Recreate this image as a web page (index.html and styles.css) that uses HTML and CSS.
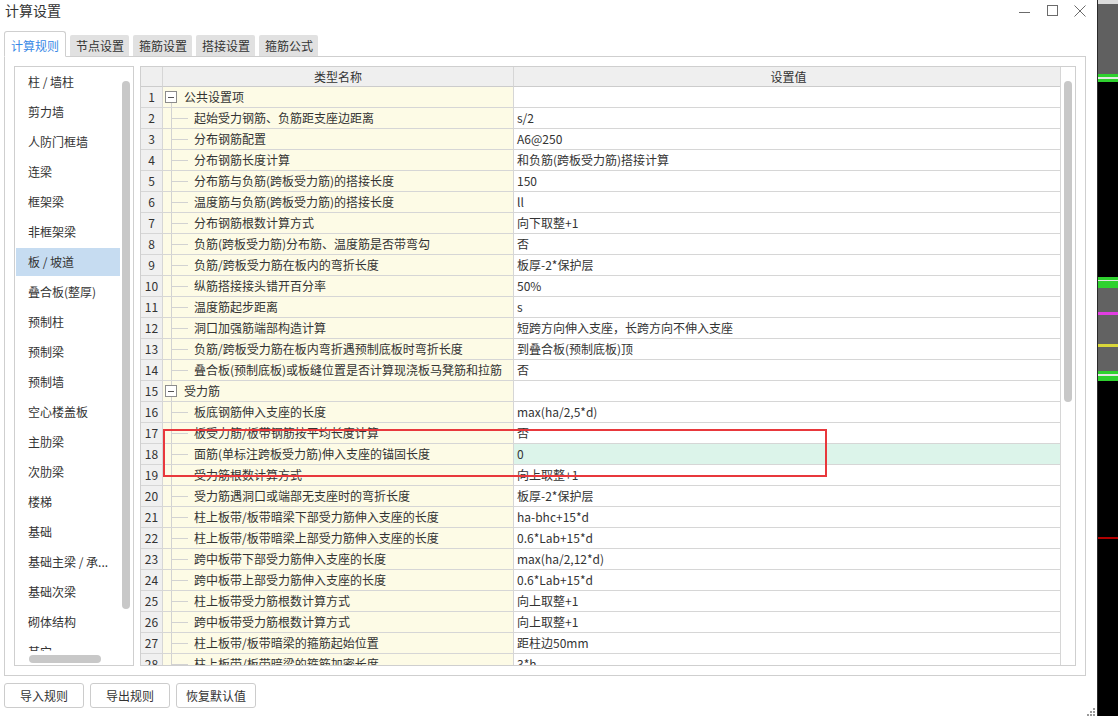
FILE: index.html
```html
<!DOCTYPE html>
<html lang="zh-CN">
<head>
<meta charset="utf-8">
<title>计算设置</title>
<link rel="stylesheet" href="styles.css">
</head>
<body>
<div class="screen">
  <div class="dialog">
    <div class="titlebar">
      <div class="title">计算设置</div>
      <div class="winctl">
        <svg class="ctl" width="11" height="11" viewBox="0 0 11 11"><path d="M0 7.5H11" stroke="#6b6b6b" fill="none"/></svg>
        <svg class="ctl" width="11" height="11" viewBox="0 0 11 11"><rect x="0.5" y="0.5" width="10" height="10" fill="none" stroke="#6b6b6b"/></svg>
        <svg class="ctl" width="12" height="12" viewBox="0 0 12 12"><path d="M0.5 0.5L11.5 11.5M11.5 0.5L0.5 11.5" stroke="#6b6b6b" fill="none"/></svg>
      </div>
    </div>
    <div class="tabs">
      <div class="tab active">计算规则</div>
      <div class="tab">节点设置</div>
      <div class="tab">箍筋设置</div>
      <div class="tab">搭接设置</div>
      <div class="tab">箍筋公式</div>
    </div>
    <div class="panel">
      <div class="sidebar">
        <div class="side-main">
          <ul class="side-list">
            <li>柱 / 墙柱</li>
            <li>剪力墙</li>
            <li>人防门框墙</li>
            <li>连梁</li>
            <li>框架梁</li>
            <li>非框架梁</li>
            <li class="sel">板 / 坡道</li>
            <li>叠合板(整厚)</li>
            <li>预制柱</li>
            <li>预制梁</li>
            <li>预制墙</li>
            <li>空心楼盖板</li>
            <li>主肋梁</li>
            <li>次肋梁</li>
            <li>楼梯</li>
            <li>基础</li>
            <li>基础主梁 / 承...</li>
            <li>基础次梁</li>
            <li>砌体结构</li>
            <li>其它</li>
          </ul>
          <div class="side-vscroll"><div class="vthumb side-thumb"></div></div>
        </div>
        <div class="side-hscroll"><div class="hthumb"></div></div>
      </div>
      <div class="grid">
        <div class="grid-main">
          <div class="row head">
            <div class="c num"></div>
            <div class="c name">类型名称</div>
            <div class="c val">设置值</div>
          </div>
          <div class="body">
            <div class="row"><div class="c num">1</div><div class="c name group first"><span class="toggle"></span>公共设置项</div><div class="c val"></div></div>
            <div class="row"><div class="c num">2</div><div class="c name child">起始受力钢筋、负筋距支座边距离</div><div class="c val">s/2</div></div>
            <div class="row"><div class="c num">3</div><div class="c name child">分布钢筋配置</div><div class="c val">A6@250</div></div>
            <div class="row"><div class="c num">4</div><div class="c name child">分布钢筋长度计算</div><div class="c val">和负筋(跨板受力筋)搭接计算</div></div>
            <div class="row"><div class="c num">5</div><div class="c name child">分布筋与负筋(跨板受力筋)的搭接长度</div><div class="c val">150</div></div>
            <div class="row"><div class="c num">6</div><div class="c name child">温度筋与负筋(跨板受力筋)的搭接长度</div><div class="c val">ll</div></div>
            <div class="row"><div class="c num">7</div><div class="c name child">分布钢筋根数计算方式</div><div class="c val">向下取整+1</div></div>
            <div class="row"><div class="c num">8</div><div class="c name child">负筋(跨板受力筋)分布筋、温度筋是否带弯勾</div><div class="c val">否</div></div>
            <div class="row"><div class="c num">9</div><div class="c name child">负筋/跨板受力筋在板内的弯折长度</div><div class="c val">板厚-2*保护层</div></div>
            <div class="row"><div class="c num">10</div><div class="c name child">纵筋搭接接头错开百分率</div><div class="c val">50%</div></div>
            <div class="row"><div class="c num">11</div><div class="c name child">温度筋起步距离</div><div class="c val">s</div></div>
            <div class="row"><div class="c num">12</div><div class="c name child">洞口加强筋端部构造计算</div><div class="c val">短跨方向伸入支座，长跨方向不伸入支座</div></div>
            <div class="row"><div class="c num">13</div><div class="c name child">负筋/跨板受力筋在板内弯折遇预制底板时弯折长度</div><div class="c val">到叠合板(预制底板)顶</div></div>
            <div class="row"><div class="c num">14</div><div class="c name child">叠合板(预制底板)或板缝位置是否计算现浇板马凳筋和拉筋</div><div class="c val">否</div></div>
            <div class="row"><div class="c num">15</div><div class="c name group"><span class="toggle"></span>受力筋</div><div class="c val"></div></div>
            <div class="row"><div class="c num">16</div><div class="c name child">板底钢筋伸入支座的长度</div><div class="c val">max(ha/2,5*d)</div></div>
            <div class="row"><div class="c num">17</div><div class="c name child">板受力筋/板带钢筋按平均长度计算</div><div class="c val">否</div></div>
            <div class="row"><div class="c num">18</div><div class="c name child">面筋(单标注跨板受力筋)伸入支座的锚固长度</div><div class="c val hl">0</div></div>
            <div class="row"><div class="c num">19</div><div class="c name child">受力筋根数计算方式</div><div class="c val">向上取整+1</div></div>
            <div class="row"><div class="c num">20</div><div class="c name child">受力筋遇洞口或端部无支座时的弯折长度</div><div class="c val">板厚-2*保护层</div></div>
            <div class="row"><div class="c num">21</div><div class="c name child">柱上板带/板带暗梁下部受力筋伸入支座的长度</div><div class="c val">ha-bhc+15*d</div></div>
            <div class="row"><div class="c num">22</div><div class="c name child">柱上板带/板带暗梁上部受力筋伸入支座的长度</div><div class="c val">0.6*Lab+15*d</div></div>
            <div class="row"><div class="c num">23</div><div class="c name child">跨中板带下部受力筋伸入支座的长度</div><div class="c val">max(ha/2,12*d)</div></div>
            <div class="row"><div class="c num">24</div><div class="c name child">跨中板带上部受力筋伸入支座的长度</div><div class="c val">0.6*Lab+15*d</div></div>
            <div class="row"><div class="c num">25</div><div class="c name child">柱上板带受力筋根数计算方式</div><div class="c val">向上取整+1</div></div>
            <div class="row"><div class="c num">26</div><div class="c name child">跨中板带受力筋根数计算方式</div><div class="c val">向上取整+1</div></div>
            <div class="row"><div class="c num">27</div><div class="c name child">柱上板带/板带暗梁的箍筋起始位置</div><div class="c val">距柱边50mm</div></div>
            <div class="row"><div class="c num">28</div><div class="c name child">柱上板带/板带暗梁的箍筋加密长度</div><div class="c val">3*h</div></div>
          </div>
        </div>
        <div class="grid-vscroll"><div class="vthumb grid-thumb"></div></div>
        <div class="redbox"></div>
      </div>
    </div>
    <div class="footer">
      <button class="btn">导入规则</button>
      <button class="btn">导出规则</button>
      <button class="btn">恢复默认值</button>
      <svg class="grip" width="9" height="9" viewBox="0 0 9 9">
        <rect x="7" y="1" width="2" height="2" fill="#9a9a9a"/>
        <rect x="4" y="4" width="2" height="2" fill="#9a9a9a"/>
        <rect x="7" y="4" width="2" height="2" fill="#9a9a9a"/>
        <rect x="1" y="7" width="2" height="2" fill="#9a9a9a"/>
        <rect x="4" y="7" width="2" height="2" fill="#9a9a9a"/>
        <rect x="7" y="7" width="2" height="2" fill="#9a9a9a"/>
      </svg>
    </div>
  </div>
  <div class="strip"></div>
</div>
</body>
</html>
```

FILE: styles.css
```css
* { box-sizing: border-box; }

html, body {
  margin: 0;
  padding: 0;
}

body {
  font-family: "Noto Sans CJK SC", "Noto Sans", "Liberation Sans", sans-serif;
  font-size: 12px;
  color: #333;
  background: #fff;
}

.screen {
  display: flex;
  width: 1118px;
  height: 716px;
  overflow: hidden;
  background: #fff;
}

.dialog {
  width: 1097px;
  height: 716px;
  display: flex;
  flex-direction: column;
  background: #fff;
}

/* title bar */
.titlebar {
  height: 24px;
  display: flex;
  align-items: flex-start;
}

.title {
  font-size: 14px;
  line-height: 21px;
  padding-left: 5px;
  color: #333;
}

.winctl {
  margin-left: auto;
  display: flex;
  align-items: flex-start;
  padding-top: 5px;
  padding-right: 11px;
}

.ctl { display: block; }
.ctl + .ctl { margin-left: 17px; }
.ctl:last-child { margin-left: 16px; }

/* tabs */
.tabs {
  height: 26px;
  margin-top: 7px;
  margin-bottom: -1px;
  padding-left: 4px;
  display: flex;
  align-items: flex-end;
  gap: 4px;
  position: relative;
  z-index: 1;
}

.tab {
  height: 21px;
  margin-bottom: 1px;
  padding: 0 6px;
  width: 59px;
  background: #e1e1e1;
  border-radius: 2px 2px 0 0;
  line-height: 21px;
  text-align: center;
  color: #333;
  white-space: nowrap;
}

.tab.active {
  height: 26px;
  width: 62px;
  margin-bottom: 0;
  background: #fff;
  border: 1px solid #cfcfcf;
  border-bottom-color: #fff;
  border-radius: 3px 3px 0 0;
  color: #3a8ae6;
  line-height: 25px;
  padding-top: 1px;
}

/* panel */
.panel {
  margin-left: 4px;
  width: 1082px;
  height: 620px;
  border: 1px solid #cfcfcf;
  padding: 9px;
  display: flex;
  gap: 6px;
}

/* sidebar */
.sidebar {
  width: 120px;
  height: 600px;
  border: 1px solid #cfcfcf;
  display: flex;
  flex-direction: column;
  background: #fff;
}

.side-main {
  height: 584px;
  display: flex;
  overflow: hidden;
}

.side-list {
  list-style: none;
  margin: 0;
  padding: 1px 0 0 0;
  width: 105px;
  overflow: hidden;
}

.side-list li {
  margin-left: 1px;
  width: 104px;
  height: 28px;
  margin-bottom: 2px;
  padding-left: 12px;
  line-height: 28px;
  white-space: nowrap;
  color: #333;
}

.side-list li.sel {
  background: #c6dcf1;
}

.side-vscroll {
  width: 13px;
  padding-top: 14px;
  padding-left: 2px;
}

.vthumb {
  width: 8px;
  background: #c8c8c8;
  border-radius: 4px;
}

.side-thumb { height: 528px; }

.side-hscroll {
  height: 14px;
  padding-top: 4px;
  padding-left: 14px;
}

.hthumb {
  width: 72px;
  height: 8px;
  background: #c8c8c8;
  border-radius: 4px;
}

/* grid */
.grid {
  position: relative;
  width: 936px;
  height: 600px;
  border: 1px solid #cfcfcf;
  display: flex;
}

.grid-main {
  flex: 1;
  display: flex;
  flex-direction: column;
  border-right: 1px solid #d6d6d6;
  overflow: hidden;
}

.body {
  flex: 1;
  overflow: hidden;
}

.row {
  display: grid;
  grid-template-columns: 22px 351px 1fr;
  height: 21px;
}

.c {
  height: 21px;
  border-bottom: 1px solid #d6d6d6;
  line-height: 20px;
  white-space: nowrap;
  overflow: hidden;
}

.num {
  background: #f0f0f0;
  border-right: 1px solid #d6d6d6;
  text-align: center;
}

.name {
  background-color: #fdfbe6;
  border-right: 1px solid #d6d6d6;
}

.val {
  padding-left: 3px;
  background: #fff;
}

.val.hl { background: #dcf4ea; }

.row.head { height: 20px; }
.row.head .c {
  height: 20px;
  line-height: 19px;
  background: #efefef;
  text-align: center;
  border-bottom-color: #cccccc;
}

.name.child {
  padding-left: 31px;
  background-image:
    linear-gradient(#d2d2d2, #d2d2d2),
    linear-gradient(#d2d2d2, #d2d2d2);
  background-position: 8px 0, 9px 50%;
  background-size: 1px 100%, 16px 1px;
  background-repeat: no-repeat;
}

.name.group {
  display: flex;
  align-items: center;
  background-image: linear-gradient(#d2d2d2, #d2d2d2);
  background-position: 8px 0;
  background-size: 1px 100%;
  background-repeat: no-repeat;
}

.name.group.first {
  background-position: 8px 100%;
  background-size: 1px 50%;
}

.toggle {
  width: 12px;
  height: 12px;
  margin-left: 2px;
  margin-right: 7px;
  border: 1px solid #8c8c8c;
  background: #fff linear-gradient(#555, #555) center / 6px 1px no-repeat;
}

.grid-vscroll {
  width: 14px;
  padding-top: 14px;
  padding-left: 3px;
  background: #fff;
}

.grid-thumb { height: 321px; }

.redbox {
  position: absolute;
  left: 22px;
  top: 362px;
  width: 664px;
  height: 48px;
  border: 2px solid #e8383c;
  pointer-events: none;
}

/* footer */
.footer {
  flex: 1;
  display: flex;
  align-items: flex-start;
  padding-top: 7px;
  padding-left: 4px;
  gap: 6px;
}

.btn {
  width: 80px;
  height: 25px;
  border: 1px solid #cccccc;
  border-radius: 3px;
  background: #fff;
  font-family: "Noto Sans CJK SC", "Noto Sans", sans-serif;
  font-size: 12px;
  color: #333;
  padding: 0;
  line-height: 23px;
}

.grip {
  margin-left: auto;
  margin-right: 2px;
  align-self: flex-end;
  display: block;
}

/* background window strip */
.strip {
  width: 21px;
  height: 716px;
  border-left: 1px solid #2a2a2a;
  background: linear-gradient(to bottom,
    #dcdcdc 0 4px,
    #606060 4px 74px,
    #2fd12f 74px 77px,
    #e2ece2 77px 79px,
    #2fd12f 79px 82px,
    #000 82px 277px,
    #2fd12f 277px 280px,
    #e6e6e6 280px 281px,
    #2fd12f 281px 288px,
    #626262 288px 312px,
    #e23de2 312px 315px,
    #626262 315px 344px,
    #d9d63a 344px 347px,
    #626262 347px 371px,
    #2fd12f 371px 374px,
    #e6e6e6 374px 376px,
    #2fd12f 376px 381px,
    #000 381px 537px,
    #b00000 537px 539px,
    #000 539px 716px);
}
```
